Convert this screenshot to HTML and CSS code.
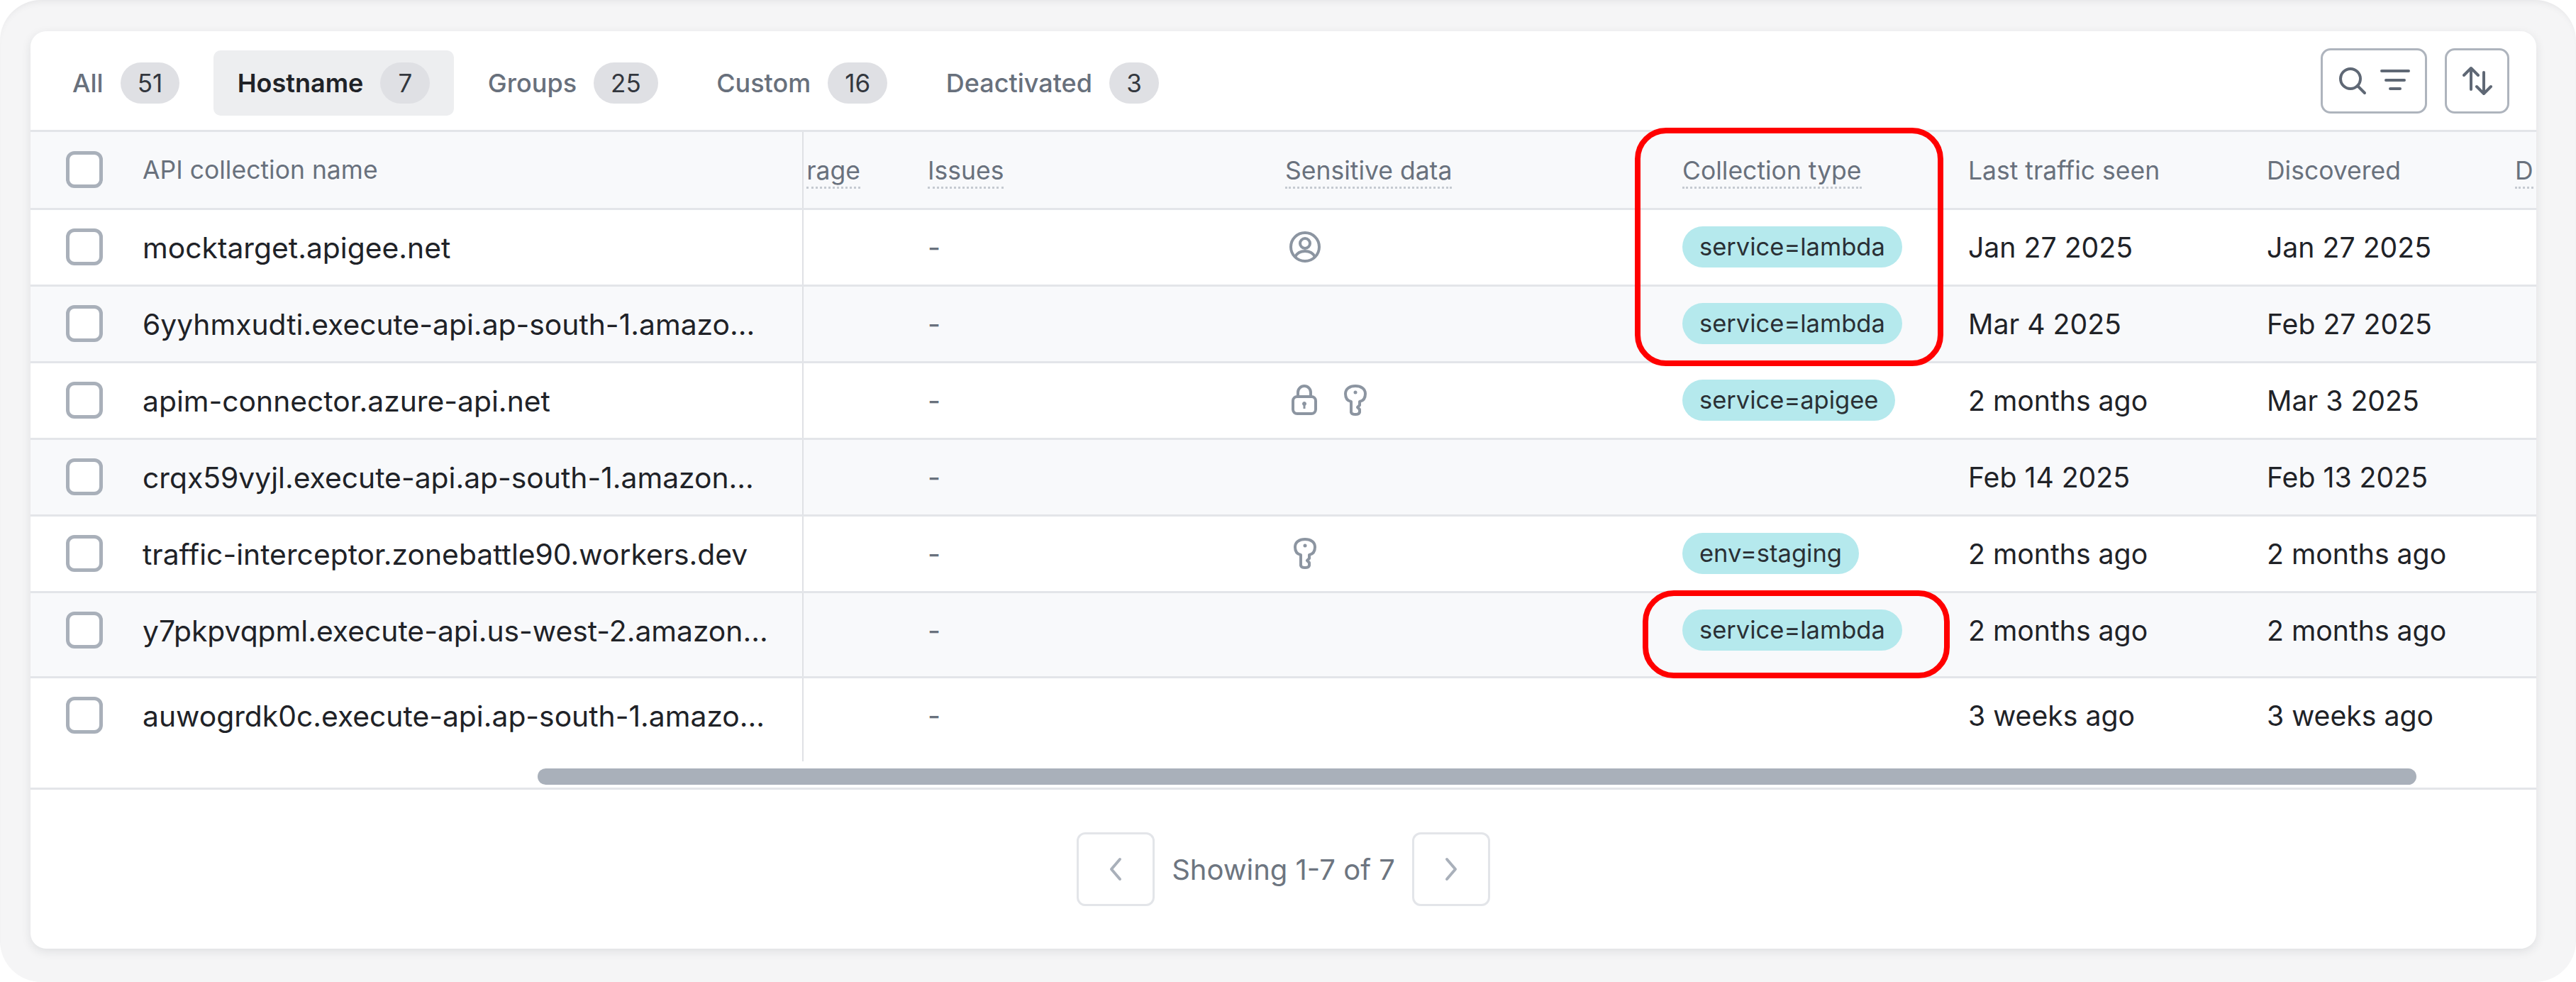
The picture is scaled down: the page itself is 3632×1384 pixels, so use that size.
FILE: index.html
```html
<!DOCTYPE html>
<html lang="en">
<head>
    <meta charset="UTF-8">
    <title>API Collections</title>
    <link rel="stylesheet" href="styles.css">
</head>
<body>
    <div class="frame">
        <div class="card">
            <div class="toolbar">
                <div class="tabs">
                    <div class="tab">All <span class="badge">51</span></div>
                    <div class="tab selected">Hostname <span class="badge">7</span></div>
                    <div class="tab">Groups <span class="badge">25</span></div>
                    <div class="tab">Custom <span class="badge">16</span></div>
                    <div class="tab">Deactivated <span class="badge">3</span></div>
                </div>
                <div class="actions">
                    <button class="icon-btn wide">
                        <svg width="42" height="42" viewBox="0 0 42 42" fill="none" stroke="#5f6875" stroke-width="4" stroke-linecap="round"><circle cx="18" cy="18" r="14"/><path d="M28 28l10 10"/></svg>
                        <svg width="42" height="42" viewBox="0 0 42 42" fill="none" stroke="#5f6875" stroke-width="4" stroke-linecap="round"><path d="M2 7h38M8 20h26M14 32h14"/></svg>
                    </button>
                    <button class="icon-btn">
                        <svg width="42" height="42" viewBox="0 0 42 42" fill="none" stroke="#5f6875" stroke-width="4" stroke-linecap="round" stroke-linejoin="round"><path d="M12 33V3M2 13L12 3l10 10M30 9v30M20 29l10 10 10-10"/></svg>
                    </button>
                </div>
            </div>

            <div class="table">
                <div class="row head">
                    <div class="cell name-cell"><span class="check"></span>API collection name</div>
                    <div class="cell clip"><span class="dotted">rage</span></div>
                    <div class="cell"><span class="dotted">Issues</span></div>
                    <div class="cell"><span class="dotted">Sensitive data</span></div>
                    <div class="cell"><span class="dotted">Collection type</span></div>
                    <div class="cell">Last traffic seen</div>
                    <div class="cell">Discovered</div>
                    <div class="cell"><span class="dotted">D</span></div>
                </div>

                <div class="row">
                    <div class="cell name-cell"><span class="check"></span>mocktarget.apigee.net</div>
                    <div class="cell"></div>
                    <div class="cell dash">-</div>
                    <div class="cell icons">
                        <svg width="46" height="46" viewBox="0 0 46 46" fill="none" stroke="#8c95a1" stroke-width="4"><circle cx="23" cy="23" r="20"/><circle cx="23" cy="18" r="7"/><path d="M9 37c3-6 8-8 14-8s11 2 14 8"/></svg>
                    </div>
                    <div class="cell"><span class="chip">service=lambda</span></div>
                    <div class="cell">Jan 27 2025</div>
                    <div class="cell">Jan 27 2025</div>
                    <div class="cell"></div>
                </div>

                <div class="row alt">
                    <div class="cell name-cell"><span class="check"></span>6yyhmxudti.execute-api.ap-south-1.amazo...</div>
                    <div class="cell"></div>
                    <div class="cell dash">-</div>
                    <div class="cell"></div>
                    <div class="cell"><span class="chip">service=lambda</span></div>
                    <div class="cell">Mar 4 2025</div>
                    <div class="cell">Feb 27 2025</div>
                    <div class="cell"></div>
                </div>

                <div class="row">
                    <div class="cell name-cell"><span class="check"></span>apim-connector.azure-api.net</div>
                    <div class="cell"></div>
                    <div class="cell dash">-</div>
                    <div class="cell icons">
                        <svg width="46" height="46" viewBox="0 0 46 46" fill="none" stroke="#8c95a1" stroke-width="4" stroke-linejoin="round"><rect x="6" y="18" width="32" height="24" rx="6"/><path d="M13 18v-6a9 9 0 0 1 18 0v6"/><circle cx="22" cy="28" r="2.5" fill="#8c95a1" stroke-width="1"/><path d="M22 29v6" stroke-width="3"/></svg>
                        <svg width="46" height="46" viewBox="0 0 46 46" fill="none" stroke="#8c95a1" stroke-width="4" stroke-linejoin="round"><path d="M9 14C9 7 15 3 23 3s14 4 14 11c0 6-3 10-8 11v5l-3 3 3 3v4c-1 4-11 4-12 0V25C12 24 9 20 9 14z"/><circle cx="23" cy="12" r="2.5" fill="#8c95a1" stroke="none"/></svg>
                    </div>
                    <div class="cell"><span class="chip">service=apigee</span></div>
                    <div class="cell">2 months ago</div>
                    <div class="cell">Mar 3 2025</div>
                    <div class="cell"></div>
                </div>

                <div class="row alt">
                    <div class="cell name-cell"><span class="check"></span>crqx59vyjl.execute-api.ap-south-1.amazon...</div>
                    <div class="cell"></div>
                    <div class="cell dash">-</div>
                    <div class="cell"></div>
                    <div class="cell"></div>
                    <div class="cell">Feb 14 2025</div>
                    <div class="cell">Feb 13 2025</div>
                    <div class="cell"></div>
                </div>

                <div class="row">
                    <div class="cell name-cell"><span class="check"></span>traffic-interceptor.zonebattle90.workers.dev</div>
                    <div class="cell"></div>
                    <div class="cell dash">-</div>
                    <div class="cell icons">
                        <svg width="46" height="46" viewBox="0 0 46 46" fill="none" stroke="#8c95a1" stroke-width="4" stroke-linejoin="round"><path d="M9 14C9 7 15 3 23 3s14 4 14 11c0 6-3 10-8 11v5l-3 3 3 3v4c-1 4-11 4-12 0V25C12 24 9 20 9 14z"/><circle cx="23" cy="12" r="2.5" fill="#8c95a1" stroke="none"/></svg>
                    </div>
                    <div class="cell"><span class="chip">env=staging</span></div>
                    <div class="cell">2 months ago</div>
                    <div class="cell">2 months ago</div>
                    <div class="cell"></div>
                </div>

                <div class="row alt tall">
                    <div class="cell name-cell"><span class="check"></span>y7pkpvqpml.execute-api.us-west-2.amazon...</div>
                    <div class="cell"></div>
                    <div class="cell dash">-</div>
                    <div class="cell"></div>
                    <div class="cell"><span class="chip">service=lambda</span></div>
                    <div class="cell">2 months ago</div>
                    <div class="cell">2 months ago</div>
                    <div class="cell"></div>
                </div>

                <div class="row last">
                    <div class="cell name-cell"><span class="check"></span>auwogrdk0c.execute-api.ap-south-1.amazo...</div>
                    <div class="cell"></div>
                    <div class="cell dash">-</div>
                    <div class="cell"></div>
                    <div class="cell"></div>
                    <div class="cell">3 weeks ago</div>
                    <div class="cell">3 weeks ago</div>
                    <div class="cell"></div>
                </div>
            </div>

            <div class="scrollbar"><div class="thumb"></div></div>

            <div class="pager">
                <button class="page-btn">
                    <svg width="20" height="34" viewBox="0 0 20 34" fill="none" stroke="#a9b0ba" stroke-width="4" stroke-linecap="round" stroke-linejoin="round"><path d="M16 3L4 17l12 14"/></svg>
                </button>
                <span class="page-text">Showing 1-7 of 7</span>
                <button class="page-btn">
                    <svg width="20" height="34" viewBox="0 0 20 34" fill="none" stroke="#a9b0ba" stroke-width="4" stroke-linecap="round" stroke-linejoin="round"><path d="M4 3l12 14L4 31"/></svg>
                </button>
            </div>

            <!-- red annotation boxes -->
            <div class="mark mark-top"></div>
            <div class="mark mark-bottom"></div>
        </div>
    </div>
</body>
</html>
```

FILE: styles.css
```css
body {
    margin: 0;
    background: #fff;
    font-family: Inter, "Noto Sans", sans-serif;
    color: #202227;
}
.frame {
    height: 1384px;
    box-sizing: border-box;
    padding: 44px 56px 47px 43px;
    background: #f5f5f6;
    border-radius: 58px;
    box-shadow: inset 0 8px 10px -6px #e4e4e6;
}
.card {
    position: relative;
    height: 100%;
    background: #fff;
    border-radius: 22px;
    box-shadow: 0 4px 14px rgba(30, 35, 45, 0.1);
    overflow: hidden;
}
.toolbar {
    height: 142px;
    box-sizing: border-box;
    display: flex;
    align-items: center;
    justify-content: space-between;
    padding: 0 38px 0 24px;
    border-bottom: 3px solid #e3e5e9;
}
.tabs {
    display: flex;
    gap: 12.5px;
    margin-top: 6px;
}
.tab {
    display: flex;
    align-items: center;
    gap: 24px;
    height: 92px;
    padding: 0 35px;
    border-radius: 10px;
    font-size: 36px;
    font-weight: 500;
    color: #68707c;
}
.tab.selected {
    background: #edeef0;
    color: #202227;
    font-weight: 600;
    padding: 0 34px;
}
.badge {
    min-width: 22px;
    padding: 0 24px;
    height: 58px;
    line-height: 58px;
    text-align: center;
    border-radius: 29px;
    background: #dfe0e4;
    color: #33373e;
    font-size: 35px;
    font-weight: 400;
}
.actions {
    display: flex;
    gap: 25px;
}
.icon-btn {
    width: 91px;
    height: 92px;
    display: flex;
    align-items: center;
    justify-content: center;
    gap: 18px;
    padding: 0;
    background: #fff;
    border: 3px solid #aeb4bd;
    border-radius: 14px;
}
.icon-btn.wide {
    width: 150px;
}
.row {
    display: grid;
    grid-template-columns: 1090px 175px 504px 560px 403px 421px 350px 1fr;
    height: 108px;
    box-sizing: border-box;
    border-bottom: 3px solid #e3e5e9;
    font-size: 39.2px;
    line-height: 52px;
}
.row.head {
    height: 110px;
    background: #f8f9fb;
    font-size: 35.5px;
    line-height: 44px;
    color: #69717d;
}
.row.alt {
    background: #f8f9fb;
}
.row.tall {
    height: 120px;
}
.row.last {
    height: 117px;
    border-bottom: none;
}
.cell {
    display: flex;
    align-items: flex-start;
    padding-top: 27px;
    white-space: nowrap;
}
.head .cell {
    padding-top: 33px;
}
.name-cell {
    gap: 56px;
    padding-left: 50px;
    border-right: 2px solid #dfe1e5;
    font-size: 40.8px;
}
.head .name-cell {
    padding-top: 27px;
    align-items: center;
    align-self: stretch;
    padding-bottom: 27px;
    font-size: 35.5px;
}
.clip {
    justify-content: flex-end;
    padding-right: 95px;
}
.check {
    flex: none;
    width: 52px;
    height: 52px;
    margin-top: -1px;
    box-sizing: border-box;
    background: #fff;
    border: 5px solid #a9b0ba;
    border-radius: 12px;
}
.dotted {
    border-bottom: 3px dotted #c5cad1;
}
.dash {
    color: #69717d;
}
.icons {
    gap: 25px;
    padding-left: 5px;
    padding-top: 29px;
}
.chip {
    height: 58px;
    line-height: 58px;
    margin-top: -4px;
    padding: 0 24px;
    border-radius: 29px;
    background: #b5e9ed;
    font-size: 34.5px;
    color: #2a3035;
}
.scrollbar {
    height: 40px;
    box-sizing: border-box;
    padding: 10px 0 0 715px;
    border-bottom: 3px solid #e3e5e9;
}
.thumb {
    width: 2649px;
    height: 23px;
    background: #a9b0ba;
    border-radius: 12px;
}
.pager {
    display: flex;
    align-items: center;
    justify-content: center;
    gap: 24px;
    padding-top: 60px;
}
.page-btn {
    width: 110px;
    height: 104px;
    display: flex;
    align-items: center;
    justify-content: center;
    padding: 0;
    background: #fff;
    border: 3px solid #e3e5e9;
    border-radius: 12px;
}
.page-text {
    font-size: 40px;
    color: #6d7580;
}
.mark {
    position: absolute;
    box-sizing: border-box;
    border: 8px solid #f00;
    border-radius: 44px;
}
.mark-top {
    left: 2262px;
    top: 136px;
    width: 435px;
    height: 336px;
}
.mark-bottom {
    left: 2273px;
    top: 788px;
    width: 433px;
    height: 124px;
}
```
